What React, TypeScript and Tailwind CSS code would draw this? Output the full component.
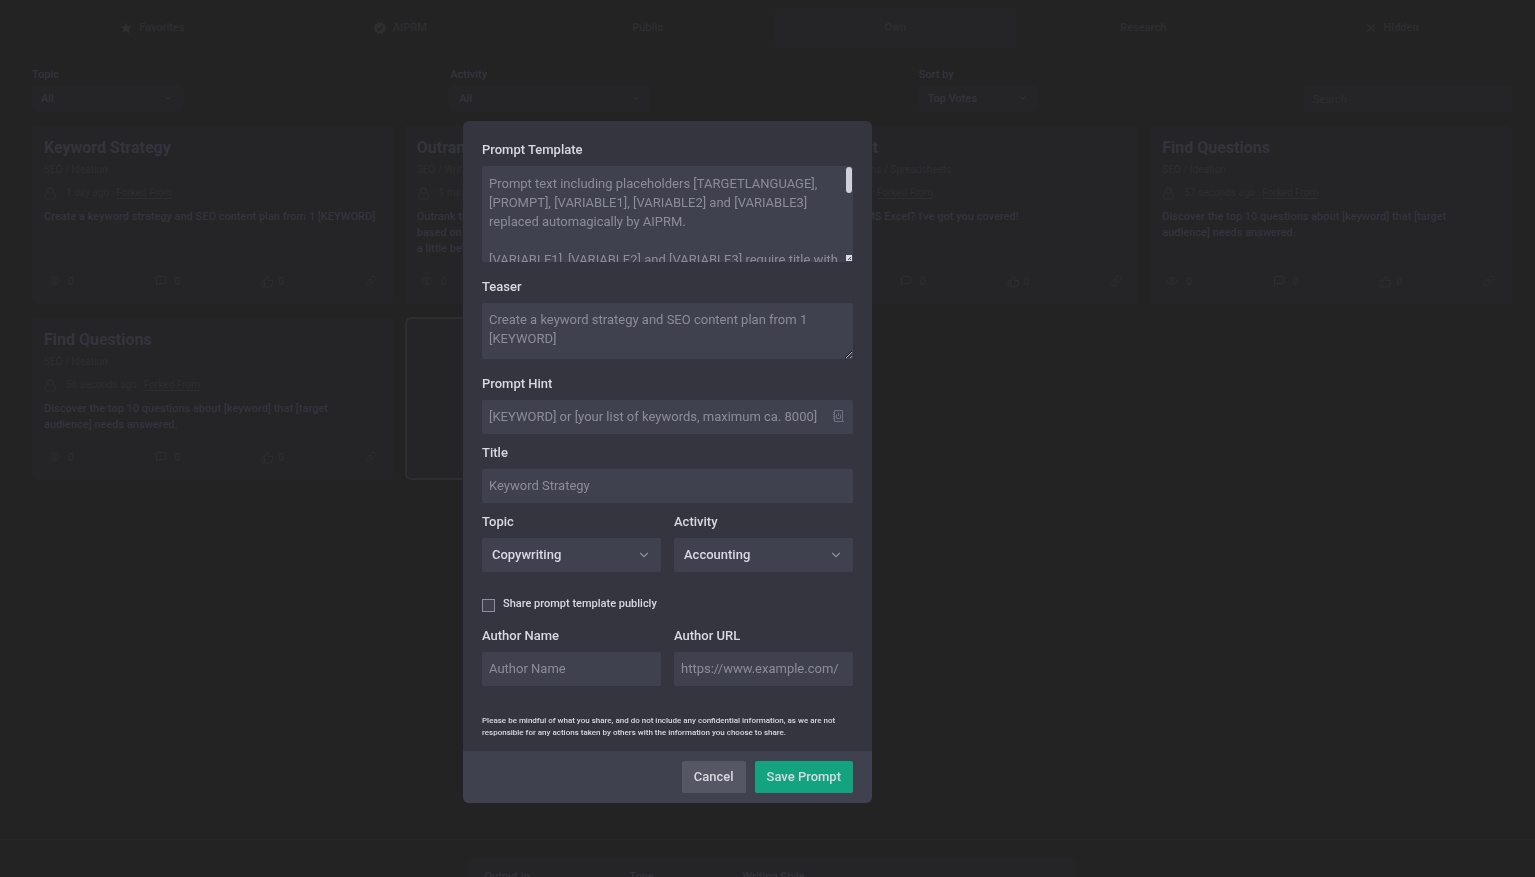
import { type ReactNode } from "react";

import {
  LuChevronDown,
  LuLink,
  LuLock,
  LuMessageSquare,
  LuEye,
  LuThumbsUp,
  LuX,
} from "react-icons/lu";
import { MdStar, MdVerified } from "react-icons/md";

const tabs = [
  { label: "Favorites", icon: MdStar },
  { label: "AIPRM", icon: MdVerified },
  { label: "Public" },
  { label: "Own", active: true },
  { label: "Research" },
  { label: "Hidden", icon: LuX },
];

const prompts = [
  {
    title: "Keyword Strategy",
    category: "SEO / Ideation",
    time: "1 day ago",
    teaser: "Create a keyword strategy and SEO content plan from 1 [KEYWORD]",
  },
  {
    title: "Outrank Article",
    category: "SEO / Writing",
    time: "1 minute ago",
    teaser:
      "Outrank the competition with an in-depth, SEO-optimized article\nbased on [YOUR COMPETITOR URL]. Be like your competitor, just\na little better ;-)",
  },
  {
    title: "Excel Expert",
    category: "General Applications / Spreadsheets",
    time: "1 minute ago",
    teaser: "Need help with MS Excel? I've got you covered!",
  },
  {
    title: "Find Questions",
    category: "SEO / Ideation",
    time: "57 seconds ago",
    teaser:
      "Discover the top 10 questions about [keyword] that [target\naudience] needs answered.",
  },
  {
    title: "Find Questions",
    category: "SEO / Ideation",
    time: "56 seconds ago",
    teaser:
      "Discover the top 10 questions about [keyword] that [target\naudience] needs answered.",
  },
];

const templatePlaceholder = `Prompt text including placeholders [TARGETLANGUAGE], [PROMPT], [VARIABLE1], [VARIABLE2] and [VARIABLE3] replaced automagically by AIPRM.

[VARIABLE1], [VARIABLE2] and [VARIABLE3] require title with optional predefined values.`;

const fieldClass =
  "block w-full rounded-xs bg-[#40414e] px-[7px] text-[#d9d9e3] placeholder:text-[#8c8c9b] outline-none";

type tFilterProps = {
  id: string;
  label: string;
  value: string;
  className: string;
};
function Filter({ id, label, value, className }: tFilterProps) {
  return (
    <div className={className}>
      <label htmlFor={id} className="block text-[11px] leading-4 font-medium">
        {label}
      </label>
      <div className="relative mt-0.5">
        <select
          id={id}
          className="h-[26px] w-full appearance-none rounded bg-[#252527] px-[9px] text-[11px] font-medium"
        >
          <option>{value}</option>
        </select>
        <LuChevronDown
          size={10}
          className="pointer-events-none absolute top-2 right-[9px]"
        />
      </div>
    </div>
  );
}

function PromptCard({ prompt }: { prompt: (typeof prompts)[number] }) {
  return (
    <article className="flex flex-col rounded bg-[#252527] px-3 pt-2.5 pb-[13px]">
      <h3 className="text-base leading-[26px] font-bold text-[#34343e]">
        {prompt.title}
      </h3>
      <p className="text-[10px] leading-[18px] text-[#2e2e31]">
        {prompt.category}
      </p>
      <p className="mt-1.5 flex items-center gap-0.5 text-[10px] leading-4 text-[#2e2e31]">
        <LuLock size={13} className="mr-0.5" />
        <span>· {prompt.time} ·</span>
        <a href="#" className="underline underline-offset-2">
          Forked From
        </a>
      </p>
      <p className="mt-2 text-[11px] leading-4 font-medium whitespace-pre-line text-[#34343e]">
        {prompt.teaser}
      </p>
      <div className="mt-auto pt-3.5">
        <div className="flex h-5 items-center justify-between px-1 text-[10px] text-[#2e2e31]">
          <span className="flex items-center gap-2">
            <LuEye size={12} />0
          </span>
          <span className="flex items-center gap-2">
            <LuMessageSquare size={12} />0
          </span>
          <span className="flex items-center gap-1">
            <LuThumbsUp size={13} />0
          </span>
          <LuLink size={12} />
        </div>
      </div>
    </article>
  );
}

type tFieldProps = { id: string; label: string; children: ReactNode };
function Field({ id, label, children }: tFieldProps) {
  return (
    <div className="min-w-0 flex-1">
      <label
        htmlFor={id}
        className="mb-1.5 block leading-5 font-medium text-[#d9d9e3]"
      >
        {label}
      </label>
      {children}
    </div>
  );
}

function ModalSelect({ id, value }: { id: string; value: string }) {
  return (
    <div className="relative">
      <select
        id={id}
        className="h-[34px] w-full appearance-none rounded-xs bg-[#40414e] px-2.5 font-medium text-[#d9d9e3]"
      >
        <option>{value}</option>
      </select>
      <LuChevronDown
        size={14}
        className="pointer-events-none absolute top-2.5 right-2.5 text-[#8e8e9e]"
      />
    </div>
  );
}

function PromptModal() {
  return (
    <div className="fixed inset-0 flex justify-center pt-[121px] pr-[200px]">
      <form
        role="dialog"
        aria-label="Prompt Template"
        className="w-[409px] self-start overflow-hidden rounded-md bg-[#353540] text-[13px]"
      >
        <div className="flex flex-col px-[19px] pt-[19px] pb-3">
          <div className="flex flex-col gap-[15px]">
            <Field id="template" label="Prompt Template">
              <div className="relative">
                <textarea
                  id="template"
                  placeholder={templatePlaceholder}
                  className={`${fieldClass} h-24 resize-none overflow-hidden py-2 pr-3 leading-[19px]`}
                />
                <span className="absolute top-px right-px h-[26px] w-1.5 rounded-full bg-[#cfcfd9]" />
                <svg
                  viewBox="0 0 6 6"
                  className="absolute right-px bottom-px size-1.5"
                  aria-hidden="true"
                >
                  <rect width="6" height="6" fill="#dcdce4" />
                  <path d="M2 5L5 2M4 5L5 4" stroke="#40414e" />
                </svg>
              </div>
            </Field>
            <Field id="teaser" label="Teaser">
              <textarea
                id="teaser"
                placeholder="Create a keyword strategy and SEO content plan from 1 [KEYWORD]"
                className={`${fieldClass} h-14 resize-y py-[7px] pr-5 leading-[19px]`}
              />
            </Field>
            <Field id="hint" label="Prompt Hint">
              <div className="relative">
                <input
                  id="hint"
                  placeholder="[KEYWORD] or [your list of keywords, maximum ca. 8000]"
                  className={`${fieldClass} h-[34px] pb-0.5`}
                />
                <svg
                  viewBox="0 0 11 12"
                  className="absolute top-2.5 right-[9px] h-3 w-[11px]"
                  fill="none"
                  stroke="#6f7080"
                  aria-hidden="true"
                >
                  <path d="M1.5 0.5H9.5V11.5H1.5Z" />
                  <path d="M0 2.5H1M0 4.5H1M0 6.5H1M0 8.5H1M10 11.5H11" />
                  <path d="M5.5 2.5V6M3.5 4.5V8.5H7.5V4.5" />
                </svg>
              </div>
            </Field>
          </div>
          <div className="mt-[9px] flex flex-col gap-[9px]">
            <Field id="title" label="Title">
              <input
                id="title"
                placeholder="Keyword Strategy"
                className={`${fieldClass} h-[34px] pb-0.5`}
              />
            </Field>
            <div className="flex gap-[13px]">
              <Field id="topic" label="Topic">
                <ModalSelect id="topic" value="Copywriting" />
              </Field>
              <Field id="activity" label="Activity">
                <ModalSelect id="activity" value="Accounting" />
              </Field>
            </div>
          </div>
          <div className="mt-6 flex items-center gap-2">
            <input
              id="share"
              type="checkbox"
              className="mt-0.5 size-[13px] appearance-none border border-[#8e8e9e] bg-[#40414e]"
            />
            <label
              htmlFor="share"
              className="text-[11px] leading-4 font-medium text-[#d9d9e3]"
            >
              Share prompt template publicly
            </label>
          </div>
          <div className="mt-3.5 flex gap-[13px]">
            <Field id="author" label="Author Name">
              <input
                id="author"
                placeholder="Author Name"
                className={`${fieldClass} h-[34px] pb-0.5`}
              />
            </Field>
            <Field id="url" label="Author URL">
              <input
                id="url"
                type="url"
                placeholder="https://www.example.com/"
                className={`${fieldClass} h-[34px] pb-0.5`}
              />
            </Field>
          </div>
          <p className="mt-[29px] text-[8px] leading-3 font-medium text-[#d9d9e3]">
            Please be mindful of what you share, and do not include any
            confidential information, as we are not responsible for any actions
            taken by others with the information you choose to share.
          </p>
        </div>
        <div className="flex justify-end gap-[9px] bg-[#40414e] px-[19px] py-2.5 font-medium text-[#d9d9e3]">
          <button
            type="button"
            className="h-8 rounded-xs bg-[#565764] px-3"
          >
            Cancel
          </button>
          <button
            type="button"
            className="h-8 rounded-xs bg-[#14a37f] px-3"
          >
            Save Prompt
          </button>
        </div>
      </form>
    </div>
  );
}

export default function App() {
  return (
    <div className="flex h-screen flex-col overflow-hidden bg-[#232324] font-[Roboto,sans-serif] text-[#34343e]">
      <main className="min-h-0 flex-1 pt-2 pr-6 pl-8">
        <nav className="flex gap-2">
          {tabs.map((tab) => (
            <button
              key={tab.label}
              className={`flex h-10 flex-1 items-center justify-center gap-1.5 rounded text-[11px] font-semibold text-[#2e2e31] ${
                tab.active ? "bg-[#252527]" : ""
              }`}
            >
              {tab.icon && <tab.icon size={14} />}
              {tab.label}
            </button>
          ))}
        </nav>
        <div className="mt-[19px] flex items-end justify-between">
          <Filter
            id="filter-topic"
            label="Topic"
            value="All"
            className="w-[150px]"
          />
          <Filter
            id="filter-activity"
            label="Activity"
            value="All"
            className="w-[200px]"
          />
          <Filter
            id="filter-sort"
            label="Sort by"
            value="Top Votes"
            className="w-[118px]"
          />
          <input
            type="search"
            aria-label="Search"
            placeholder="Search"
            className="h-[26px] w-[206px] rounded bg-[#252527] px-2 text-[11px] placeholder:text-[#2e2e31]"
          />
        </div>
        <div className="mt-[13px] grid grid-cols-4 gap-x-3 gap-y-[13px]">
          {prompts.map((prompt, index) => (
            <PromptCard key={index} prompt={prompt} />
          ))}
          <button
            aria-label="Add prompt template"
            className="rounded-md border-2 border-[#2e2e31] bg-[#252527]"
          />
        </div>
      </main>
      <footer className="h-[38px] shrink-0 overflow-hidden border-t border-[#28282a] pt-[17px] pl-2">
        <div className="mx-auto flex w-[608px] items-start rounded bg-[#252527] px-[17px] pt-3 text-[11px] leading-4 font-medium">
          <span className="w-[145px]">Output In</span>
          <span className="w-[113px]">Tone</span>
          <span>Writing Style</span>
        </div>
      </footer>
      <PromptModal />
    </div>
  );
}
